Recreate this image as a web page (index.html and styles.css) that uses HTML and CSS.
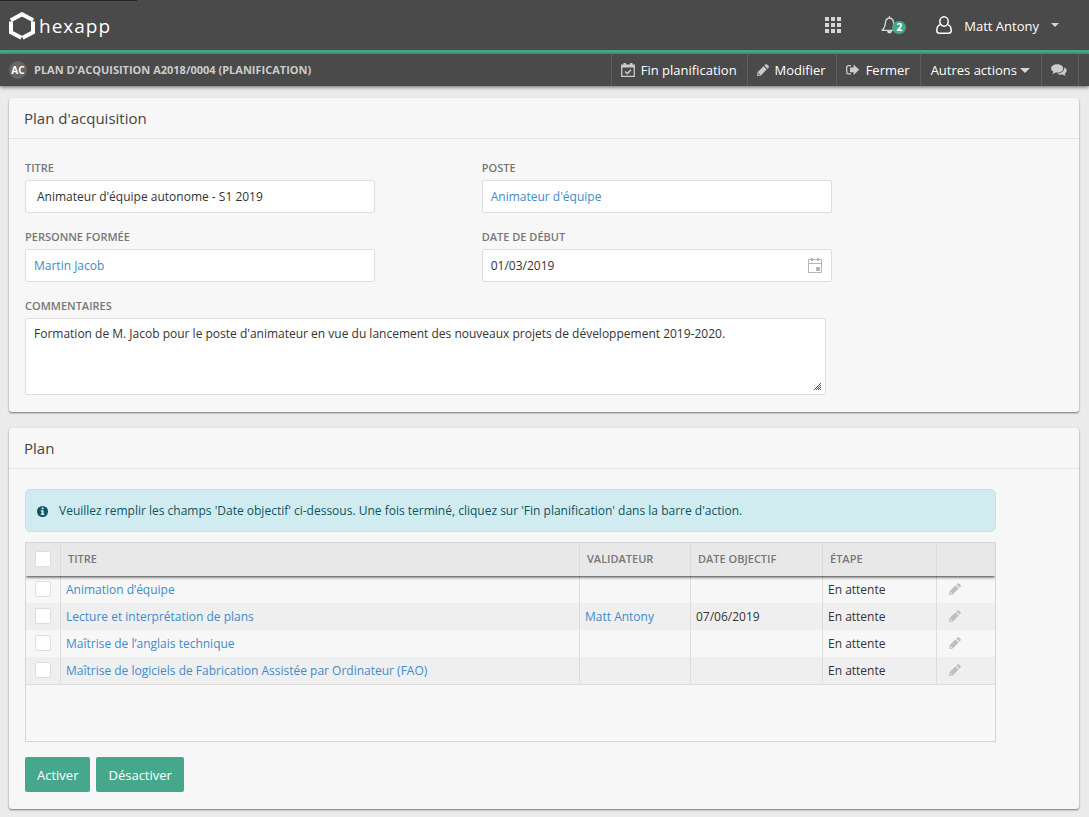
FILE: index.html
```html
<!DOCTYPE html>
<html lang="fr">
<head>
  <meta charset="UTF-8" />
  <meta name="viewport" content="width=device-width, initial-scale=1.0"/>
  <title>hexapp - Plan d'acquisition</title>
  <link rel="stylesheet" href="styles.css">
</head>
<body>

  <!-- Shared icons -->
  <svg class="sprite" aria-hidden="true">
    <symbol id="pencil" viewBox="0 0 12 12">
      <path d="M0 12 L.6 8.2 L6.5 2.3 L9.7 5.5 L3.8 11.4 Z M7.3 1.5 L8.5 .4 Q9.2 -.2 9.9 .4 L11.6 2.1 Q12.2 2.8 11.6 3.5 L10.5 4.7 Z M1.5 9 L1.1 10.1 L1.9 10.9 L3 10.5 Z" fill-rule="evenodd"/>
    </symbol>
  </svg>

  <header class="topbar">
    <a class="brand" href="#">
      <svg width="26" height="28" viewBox="0 0 26 28" fill="none" stroke="#fff" stroke-width="4">
        <path d="M1.8 8.2 L13 2.2 L24.2 8.2"/>
        <path d="M2 9.6 V20.2 L12.4 25.7"/>
        <path d="M24 9.6 V20.2 L13.6 25.7"/>
      </svg>
      <span>hexapp</span>
    </a>
    <div class="tools">
      <button class="tool" aria-label="Applications">
        <svg width="16" height="16" viewBox="0 0 16 16" fill="#d6d6d6">
          <path d="M0 0h4v4H0zM6 0h4v4H6zM12 0h4v4h-4zM0 6h4v4H0zM6 6h4v4H6zM12 6h4v4h-4zM0 12h4v4H0zM6 12h4v4H6zM12 12h4v4h-4z"/>
        </svg>
      </button>
      <button class="tool bell" aria-label="Notifications">
        <svg width="17" height="18" viewBox="0 0 17 18">
          <path d="M8.5 2 C5.6 2.2 4.6 4.3 4.4 7 C4.2 10.5 3.4 12.3 1.2 14.3 H15.8 C13.6 12.3 12.8 10.5 12.6 7 C12.4 4.3 11.4 2.2 8.5 2 Z M8.5 2 V.6" fill="none" stroke="#d6d6d6" stroke-width="1.3" stroke-linecap="round" stroke-linejoin="round"/>
          <path d="M6 15 H11 Q10.6 17.6 8.5 17.6 Q6.4 17.6 6 15 Z" fill="#d6d6d6"/>
        </svg>
        <span class="badge">2</span>
      </button>
      <button class="user">
        <svg width="16" height="18" viewBox="0 0 16 18" fill="none" stroke="#fff" stroke-width="1.5">
          <path d="M4.2 8.6 C1.8 9.4 .8 11.6 .8 14.4 Q.8 17.2 3.4 17.2 H12.6 Q15.2 17.2 15.2 14.4 C15.2 11.6 14.2 9.4 11.8 8.6"/>
          <ellipse cx="8" cy="5.5" rx="4.2" ry="4.7"/>
        </svg>
        <span>Matt Antony</span>
        <i class="caret"></i>
      </button>
    </div>
  </header>

  <div class="actionbar">
    <span class="avatar">AC</span>
    <h1>Plan d'acquisition A2018/0004 (Planification)</h1>
    <nav class="actions">
      <button>
        <svg width="14" height="14" viewBox="0 0 14 14">
          <path d="M.7 2.2 H13.3 V13.3 H.7 Z" fill="none" stroke="#ccc" stroke-width="1.3"/>
          <path d="M.5 2 H13.5 V4.5 H.5 Z M2.5 0 H4.8 V3 H2.5 Z M9.2 0 H11.5 V3 H9.2 Z" fill="#ccc"/>
          <path d="M4.2 8.4 L6.3 10.6 L10 6.7" fill="none" stroke="#ccc" stroke-width="1.5"/>
        </svg>
        Fin planification
      </button>
      <button>
        <svg width="12" height="12" fill="#ccc"><use href="#pencil"/></svg>
        Modifier
      </button>
      <button>
        <svg width="14" height="12" viewBox="0 0 14 12">
          <path d="M5 1.6 H2.4 Q.7 1.6 .7 3.2 V8.2 Q.7 9.8 2.4 9.8 H5" fill="none" stroke="#ccc" stroke-width="1.3"/>
          <path d="M4 3.6 H7.6 V.6 L13.2 5.8 L7.6 11 V8.2 H4 Z" fill="#ccc"/>
        </svg>
        Fermer
      </button>
      <button class="menu">Autres actions<i class="caret"></i></button>
      <button class="comments" aria-label="Commentaires">
        <svg width="16" height="12" viewBox="0 0 16 12" fill="#ccc">
          <path d="M6.2 .2 C9.6 .2 12.2 2 12.2 4.4 C12.2 6.8 9.6 8.6 6.2 8.6 Q5.4 8.6 4.6 8.4 Q3.2 9.6 1.2 9.7 Q2.2 8.8 2.3 7.5 C.9 6.7 .1 5.6 .1 4.4 C.1 2 2.8 .2 6.2 .2 Z"/>
          <path d="M13.2 3.2 C14.8 4 15.7 5.2 15.7 6.6 C15.7 7.8 15 8.8 13.8 9.6 Q13.9 10.9 15 11.8 Q12.8 11.7 11.4 10.6 C9.2 10.9 7.4 10.5 6 9.5 C10.4 9.4 13.9 6.9 13.2 3.2 Z"/>
        </svg>
      </button>
    </nav>
  </div>

  <main>
    <!-- Plan details -->
    <section class="card">
      <h2>Plan d'acquisition</h2>
      <div class="card-body">
        <form class="form">
          <div class="field">
            <label for="titre">Titre</label>
            <input class="box inset" type="text" id="titre" value="Animateur d'équipe autonome - S1 2019">
          </div>
          <div class="field">
            <span class="label">Poste</span>
            <div class="box"><a href="#">Animateur d'équipe</a></div>
          </div>
          <div class="field">
            <span class="label">Personne formée</span>
            <div class="box"><a href="#">Martin Jacob</a></div>
          </div>
          <div class="field">
            <label for="debut">Date de début</label>
            <div class="box">
              <input type="text" id="debut" value="01/03/2019">
              <button type="button" class="icon-btn" aria-label="Choisir une date">
                <svg width="15" height="17" viewBox="0 0 15 17">
                  <path d="M.5 2.5 H13.5 V15.5 H.5 Z M.5 6.5 H13.5" fill="none" stroke="#b5b5b5"/>
                  <path d="M3 1h2v3H3zM9 1h2v3H9zM8 10h4v4H8z" fill="#b5b5b5"/>
                </svg>
              </button>
            </div>
          </div>
          <div class="field wide">
            <label for="commentaires">Commentaires</label>
            <textarea id="commentaires">Formation de M. Jacob pour le poste d'animateur en vue du lancement des nouveaux projets de développement 2019-2020.</textarea>
          </div>
        </form>
      </div>
    </section>

    <!-- Plan lines -->
    <section class="card">
      <h2>Plan</h2>
      <div class="card-body">
        <div class="alert">
          <svg width="11" height="11" viewBox="0 0 11 11">
            <circle cx="5.5" cy="5.5" r="5.5" fill="#0c5460"/>
            <path d="M4.6 1.6h2v1.6h-2zM3.8 4.2h2.8v3.6h.8v1.2H3.8V7.8h.8V5.4h-.8z" fill="#d1ecf1"/>
          </svg>
          <span>Veuillez remplir les champs 'Date objectif' ci-dessous. Une fois terminé, cliquez sur 'Fin planification' dans la barre d'action.</span>
        </div>
        <div class="grid">
          <table>
            <thead>
              <tr>
                <th class="c-check"><input type="checkbox" aria-label="Tout sélectionner"></th>
                <th>Titre</th>
                <th class="c-valid">Validateur</th>
                <th class="c-date">Date objectif</th>
                <th class="c-step">Étape</th>
                <th class="c-edit"></th>
              </tr>
            </thead>
            <tbody>
              <tr>
                <td><input type="checkbox" aria-label="Animation d’équipe"></td>
                <td><a href="#">Animation d’équipe</a></td>
                <td></td>
                <td></td>
                <td>En attente</td>
                <td><button class="icon-btn" aria-label="Modifier"><svg width="12" height="12" fill="#bfbfbf"><use href="#pencil"/></svg></button></td>
              </tr>
              <tr>
                <td><input type="checkbox" aria-label="Lecture et interprétation de plans"></td>
                <td><a href="#">Lecture et interprétation de plans</a></td>
                <td><a href="#">Matt Antony</a></td>
                <td>07/06/2019</td>
                <td>En attente</td>
                <td><button class="icon-btn" aria-label="Modifier"><svg width="12" height="12" fill="#bfbfbf"><use href="#pencil"/></svg></button></td>
              </tr>
              <tr>
                <td><input type="checkbox" aria-label="Maîtrise de l’anglais technique"></td>
                <td><a href="#">Maîtrise de l’anglais technique</a></td>
                <td></td>
                <td></td>
                <td>En attente</td>
                <td><button class="icon-btn" aria-label="Modifier"><svg width="12" height="12" fill="#bfbfbf"><use href="#pencil"/></svg></button></td>
              </tr>
              <tr>
                <td><input type="checkbox" aria-label="Maîtrise de logiciels de Fabrication Assistée par Ordinateur (FAO)"></td>
                <td><a href="#">Maîtrise de logiciels de Fabrication Assistée par Ordinateur (FAO)</a></td>
                <td></td>
                <td></td>
                <td>En attente</td>
                <td><button class="icon-btn" aria-label="Modifier"><svg width="12" height="12" fill="#bfbfbf"><use href="#pencil"/></svg></button></td>
              </tr>
            </tbody>
          </table>
        </div>
        <div class="buttons">
          <button class="btn">Activer</button>
          <button class="btn">Désactiver</button>
        </div>
      </div>
    </section>
  </main>

</body>
</html>
```
FILE: styles.css
```css
* {
  box-sizing: border-box;
}

body {
  margin: 0;
  background: #ebebeb;
  color: #333;
  font-family: "Open Sans", sans-serif;
  font-size: 12px;
  line-height: 16px;
}

a {
  color: #428bca;
  text-decoration: none;
}

button {
  padding: 0;
  border: none;
  background: none;
  color: inherit;
  font: inherit;
  cursor: pointer;
}

svg {
  display: block;
  flex: none;
}

.sprite {
  position: absolute;
  width: 0;
  height: 0;
}

.caret {
  border: 4px solid transparent;
  border-top-color: #d6d6d6;
  border-bottom: none;
}

/* Top bar */
.topbar {
  display: flex;
  justify-content: space-between;
  height: 54px;
  background: linear-gradient(#222, #222) no-repeat 0 0 / 137px 1px #4a4a4a;
  border-bottom: 4px solid #45a88c;
}

.brand {
  display: flex;
  align-items: center;
  gap: 4px;
  padding: 2px 0 0 9px;
  color: #fff;
  font-size: 19px;
  line-height: 28px;
  letter-spacing: 1px;
}

.tools {
  display: flex;
  align-items: center;
  padding-right: 30px;
  color: #fff;
  font-size: 13px;
}

.bell {
  position: relative;
  margin: 0 38px 0 40px;
}

.badge {
  position: absolute;
  top: 5px;
  left: 11px;
  width: 14px;
  height: 13px;
  border-radius: 7px;
  background: #45a88c;
  color: #fff;
  font-size: 10px;
  font-weight: 700;
  line-height: 13px;
}

.user {
  display: flex;
  align-items: center;
  gap: 12px;
}

.user span {
  padding-top: 2px;
}

/* Action bar */
.actionbar {
  display: flex;
  align-items: center;
  height: 32px;
  padding: 0 10px 0 9px;
  background: #4a4a4a;
  box-shadow: 0 1px 4px rgba(0, 0, 0, 0.6);
}

.avatar {
  width: 18px;
  height: 18px;
  border-radius: 9px;
  background: #666;
  color: #fff;
  font-size: 10px;
  font-weight: 700;
  line-height: 18px;
  text-align: center;
}

.actionbar h1 {
  flex: 1;
  margin: 0 0 0 7px;
  color: #ccc;
  font-size: 11px;
  font-weight: 700;
  text-transform: uppercase;
}

.actions {
  display: flex;
  height: 32px;
  border-left: 1px solid #5c5c5c;
}

.actions button {
  display: flex;
  align-items: center;
  gap: 6px;
  padding: 0 10px 0 9px;
  border-right: 1px solid #5c5c5c;
  color: #fff;
  font-size: 13px;
}

.actions .menu {
  gap: 3px;
  padding: 0 11px 0 10px;
}

.actions .menu .caret {
  border-width: 5px 5px 0;
}

.actions .comments {
  padding: 0 11px 0 9px;
}

/* Cards */
main {
  display: flex;
  flex-direction: column;
  gap: 16px;
  padding: 12px 10px 8px 9px;
}

.card {
  background: #f7f7f7;
  border-radius: 3px;
  box-shadow: 0 1px 2px rgba(0, 0, 0, 0.5);
}

.card h2 {
  margin: 0;
  padding: 10px 15px;
  border-bottom: 1px solid #e5e5e5;
  color: #444;
  font-size: 15px;
  font-weight: 400;
  line-height: 20px;
}

.card-body {
  padding: 20px 16px 17px;
}

/* Form */
.form {
  display: grid;
  grid-template-columns: 44% 44%;
  row-gap: 16px;
  padding-top: 1px;
}

.field {
  max-width: 350px;
}

.wide {
  grid-column: 1 / 3;
  max-width: 801px;
}

label,
.label {
  display: block;
  margin-bottom: 4px;
  color: #777;
  font-size: 11px;
  font-weight: 600;
  text-transform: uppercase;
}

.box,
textarea {
  display: flex;
  align-items: center;
  width: 100%;
  height: 33px;
  padding: 0 8px;
  border: 1px solid #ddd;
  border-radius: 2px;
  background: #fff;
  color: #333;
  font: inherit;
}

.inset {
  padding: 0 11px;
}

.box input {
  flex: 1;
  min-width: 0;
  padding: 0;
  border: none;
  color: inherit;
  font: inherit;
}

textarea {
  display: block;
  height: 77px;
  padding: 7px 8px;
  resize: vertical;
}

textarea::-webkit-resizer {
  border: solid #fff;
  border-width: 4px 4px 4px 3px;
  background:
    linear-gradient(135deg, #fff 50%, transparent 50%),
    repeating-conic-gradient(#555 0 25%, #fff 0 50%) 0 0 / 2px 2px;
}

/* Info message */
.alert {
  display: flex;
  align-items: center;
  gap: 11px;
  max-width: 971px;
  margin-bottom: 10px;
  padding: 13px 11px 12px;
  border: 1px solid #bee5eb;
  border-radius: 5px;
  background: #d1ecf1;
  color: #0c5460;
}

/* Table */
.grid {
  max-width: 971px;
  min-height: 200px;
  margin-bottom: 15px;
  border: 1px solid #d5d5d5;
  overflow: hidden;
}

table {
  width: 100%;
  table-layout: fixed;
  border-collapse: separate;
  border-spacing: 0;
}

thead {
  position: relative;
  box-shadow: 0 1px 3px rgba(0, 0, 0, 0.8);
}

th {
  height: 33px;
  padding: 0 7px 1px;
  background: #e8e8e8;
  border-right: 1px solid #d9d9d9;
  color: #777;
  font-size: 11px;
  font-weight: 600;
  text-align: left;
  text-transform: uppercase;
}

td {
  height: 27px;
  padding: 0 5px;
  border-right: 1px solid #ddd;
}

th:last-child,
td:last-child {
  border-right: none;
}

tbody tr:nth-child(even) {
  background: #efefef;
}

tbody tr:last-child td {
  height: 28px;
  border-bottom: 1px solid #ddd;
}

th:first-child {
  padding: 0 9px 1px;
}

td:first-child {
  padding: 0 9px 1px;
}

td:last-child {
  padding: 0 12px 1px;
}

.c-check {
  width: 35px;
}

.c-valid {
  width: 111px;
}

.c-date {
  width: 132px;
}

.c-step {
  width: 114px;
}

.c-edit {
  width: 58px;
}

input[type="checkbox"] {
  display: block;
  appearance: none;
  width: 16px;
  height: 16px;
  margin: 0;
  border: 1px solid #ddd;
  border-radius: 2px;
  background: #fff;
}

.icon-btn {
  display: block;
}

/* Buttons */
.buttons {
  display: flex;
  gap: 6px;
}

.btn {
  height: 35px;
  padding: 0 12px;
  border-radius: 2px;
  background: #45a88c;
  color: #fff;
  font-size: 13px;
}
```
